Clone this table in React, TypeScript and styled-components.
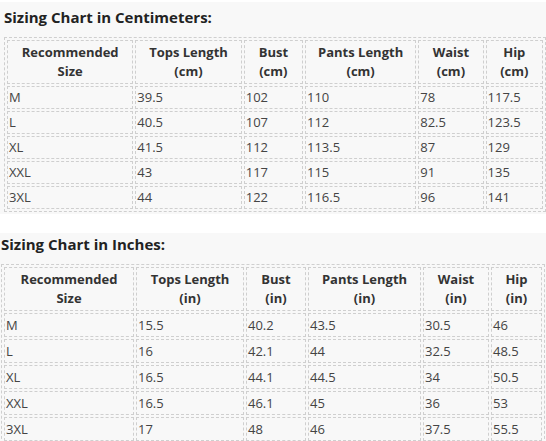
import React from "react";
import styled, { createGlobalStyle } from "styled-components";

const Global = createGlobalStyle`
  html, body { margin: 0; padding: 0; background: #ffffff; }
  body { font-family: "Open Sans", "Noto Sans", sans-serif; color: #333; }
`;

const Page = styled.div`
  width: 546px;
  height: 441px;
  overflow: hidden;
  display: flex;
  flex-direction: column;
  gap: 19px;
  padding-top: 2px;
  box-sizing: border-box;
`;

const Section = styled.section<{ $indent: number; $top: number }>`
  background: #f8f8f8;
  padding-left: ${(p) => p.$indent}px;
  padding-top: ${(p) => p.$top}px;
  padding-bottom: 2px;
`;

const Title = styled.h3`
  margin: 0 0 10px 0;
  font-size: 15px;
  line-height: 20px;
  font-weight: 700;
  color: #222;
`;

const Table = styled.table`
  border: 1px dashed #cfcfcf;
  border-collapse: separate;
  border-spacing: 2px;
  table-layout: fixed;
  font-size: 13px;
`;

const HeadCell = styled.th`
  border: 1px dashed #cfcfcf;
  font-weight: 700;
  color: #333;
  text-align: center;
  line-height: 19px;
  padding: 2px 1px;
`;

const Cell = styled.td<{ $tall?: boolean }>`
  border: 1px dashed #cfcfcf;
  text-align: left;
  color: #444;
  line-height: ${(p) => (p.$tall ? 20 : 19)}px;
  padding: 1px 0 1px 1px;
  white-space: nowrap;
`;

type Chart = {
  title: string;
  unit: string;
  indent: number;
  top: number;
  tall: boolean;
  widths: number[];
  rows: string[][];
};

const charts: Chart[] = [
  {
    title: "Sizing Chart in Centimeters:",
    unit: "cm",
    indent: 4,
    top: 5,
    tall: false,
    widths: [127, 108, 60, 113, 66, 58],
    rows: [
      ["M", "39.5", "102", "110", "78", "117.5"],
      ["L", "40.5", "107", "112", "82.5", "123.5"],
      ["XL", "41.5", "112", "113.5", "87", "129"],
      ["XXL", "43", "117", "115", "91", "135"],
      ["3XL", "44", "122", "116.5", "96", "141"],
    ],
  },
  {
    title: "Sizing Chart in Inches:",
    unit: "in",
    indent: 1,
    top: 1,
    tall: true,
    widths: [130, 108, 60, 113, 66, 51],
    rows: [
      ["M", "15.5", "40.2", "43.5", "30.5", "46"],
      ["L", "16", "42.1", "44", "32.5", "48.5"],
      ["XL", "16.5", "44.1", "44.5", "34", "50.5"],
      ["XXL", "16.5", "46.1", "45", "36", "53"],
      ["3XL", "17", "48", "46", "37.5", "55.5"],
    ],
  },
];

const headers = ["Tops Length", "Bust", "Pants Length", "Waist", "Hip"];

export default function App() {
  return (
    <>
      <Global />
      <Page>
        {charts.map((c) => (
          <Section key={c.title} $indent={c.indent} $top={c.top}>
            <Title>{c.title}</Title>
            <Table>
              <colgroup>
                {c.widths.map((w, i) => (
                  <col key={i} style={{ width: w }} />
                ))}
              </colgroup>
              <thead>
                <tr>
                  <HeadCell>
                    Recommended
                    <br />
                    Size
                  </HeadCell>
                  {headers.map((h) => (
                    <HeadCell key={h}>
                      {h}
                      <br />({c.unit})
                    </HeadCell>
                  ))}
                </tr>
              </thead>
              <tbody>
                {c.rows.map((r) => (
                  <tr key={r[0]}>
                    {r.map((v, i) => (
                      <Cell key={i} $tall={c.tall}>
                        {v}
                      </Cell>
                    ))}
                  </tr>
                ))}
              </tbody>
            </Table>
          </Section>
        ))}
      </Page>
    </>
  );
}
